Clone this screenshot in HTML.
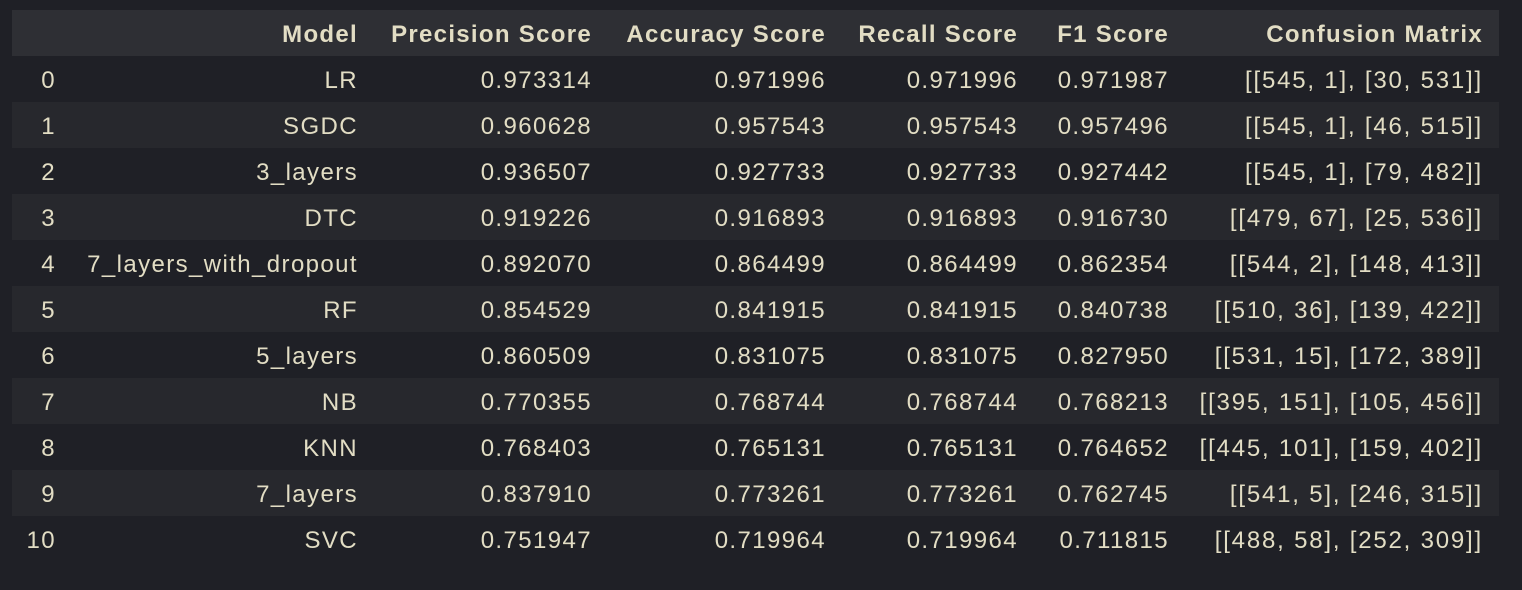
<!DOCTYPE html>
<html><head><style>
body{margin:0;background:#1f2026;width:1522px;height:590px;overflow:hidden;font-family:"Liberation Sans",sans-serif;color:#e2ddc4;}
.row{position:absolute;left:12px;width:1487px;height:46px;}
.row span{position:absolute;top:2px;line-height:46px;font-size:24px;white-space:nowrap;letter-spacing:1.4px}
.row span.cm{letter-spacing:1.8px}
.h{background:#2e2f34;font-weight:bold}
.h span,.h span.cm{letter-spacing:1.3px}
.a{background:#27282d}
</style></head><body>
<div id="t"></div>
<script>
const rows=[
["0","LR","0.973314","0.971996","0.971996","0.971987","[[545, 1], [30, 531]]"],
["1","SGDC","0.960628","0.957543","0.957543","0.957496","[[545, 1], [46, 515]]"],
["2","3_layers","0.936507","0.927733","0.927733","0.927442","[[545, 1], [79, 482]]"],
["3","DTC","0.919226","0.916893","0.916893","0.916730","[[479, 67], [25, 536]]"],
["4","7_layers_with_dropout","0.892070","0.864499","0.864499","0.862354","[[544, 2], [148, 413]]"],
["5","RF","0.854529","0.841915","0.841915","0.840738","[[510, 36], [139, 422]]"],
["6","5_layers","0.860509","0.831075","0.831075","0.827950","[[531, 15], [172, 389]]"],
["7","NB","0.770355","0.768744","0.768744","0.768213","[[395, 151], [105, 456]]"],
["8","KNN","0.768403","0.765131","0.765131","0.764652","[[445, 101], [159, 402]]"],
["9","7_layers","0.837910","0.773261","0.773261","0.762745","[[541, 5], [246, 315]]"],
["10","SVC","0.751947","0.719964","0.719964","0.711815","[[488, 58], [252, 309]]"]];
const rights=[56,358,592,826,1018,1169,1483];
let h='<div class="row h" style="top:10px">';
["","Model","Precision Score","Accuracy Score","Recall Score","F1 Score","Confusion Matrix"].forEach((c,i)=>{h+=`<span class="${i==6?'cm':''}" style="right:${1499-rights[i]}px">${c}</span>`});
h+='</div>';
rows.forEach((r,k)=>{h+=`<div class="row ${k%2?'a':''}" style="top:${56+k*46}px">`;r.forEach((c,i)=>{h+=`<span class="${i==6?'cm':''}" style="right:${1499-rights[i]}px">${c}</span>`});h+='</div>'});
document.getElementById('t').innerHTML=h;
</script>
</body></html>
